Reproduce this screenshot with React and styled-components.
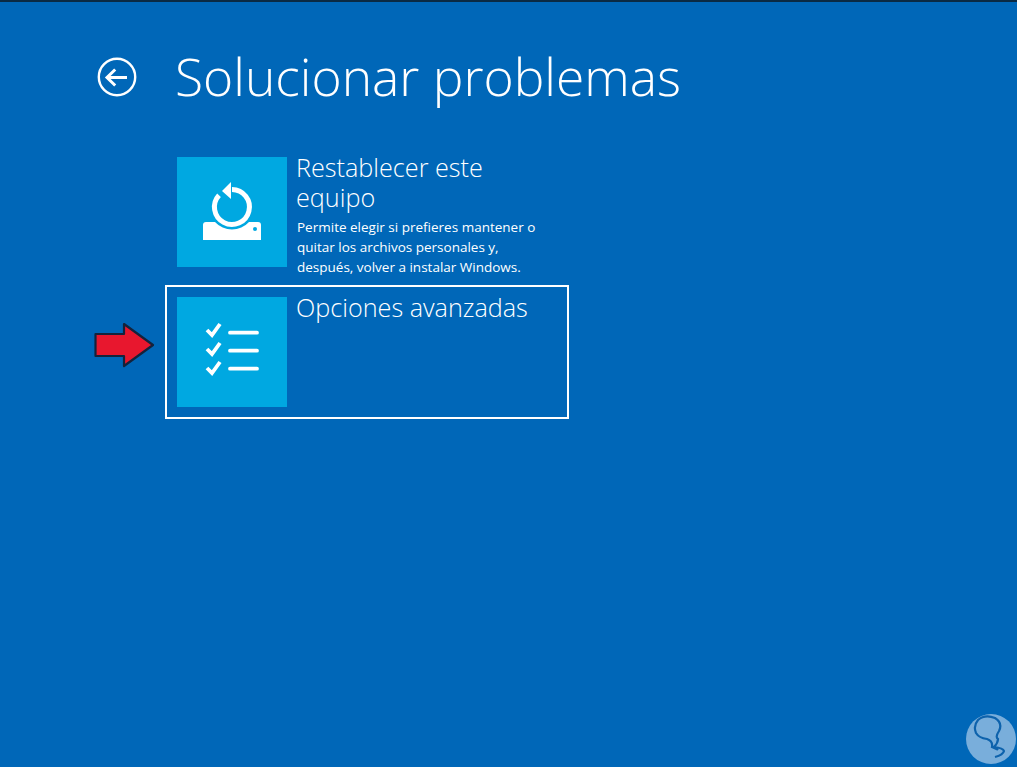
import React from 'react'
import styled, { createGlobalStyle } from 'styled-components'

const Global = createGlobalStyle`
  html, body { margin: 0; padding: 0; background: #0067b8; }
  body { font-family: "Open Sans", "Noto Sans", sans-serif; color: #fff; }
`

const Screen = styled.div`
  position: relative;
  width: 1017px;
  height: 767px;
  overflow: hidden;
  box-sizing: border-box;
  background: #0067b8;
  border-top: 2px solid #0a2a44;
  padding: 36px 0 0 97px;
`

const Header = styled.header`
  display: flex;
  align-items: center;
  gap: 38px;
  height: 78px;
`

const BackButton = styled.button`
  display: block;
  width: 40px;
  height: 40px;
  padding: 0;
  border: 0;
  background: none;
`

const Title = styled.h1`
  margin: -2px 0 0;
  font-size: 51.500px;
  font-weight: 300;
  line-height: 78px;
  white-space: nowrap;
`

const List = styled.div`
  display: flex;
  flex-direction: column;
  gap: 6px;
  margin: 29px 0 0 68px;
  width: 404px;
`

const Option = styled.div`
  display: flex;
  gap: 9px;
  box-sizing: border-box;
  height: 134px;
  padding: 10px;
  border: 2px solid ${(p) => (p.$selected ? '#fff' : 'transparent')};
`

const Tile = styled.div`
  flex: none;
  width: 110px;
  height: 110px;
  background: #00a8e1;
  display: flex;
  align-items: center;
  justify-content: center;
`

const Body = styled.div`
  width: 250px;
`

const OptionTitle = styled.div`
  font-size: 25.200px;
  font-weight: 300;
  line-height: 30px;
  margin-top: -5px;
`

const OptionText = styled.div`
  font-size: 13.500px;
  line-height: 20px;
  margin-top: 5px;
  margin-left: 1px;
`

const Arrow = styled.svg`
  position: absolute;
  left: 93px;
  top: 319px;
`

const Badge = styled.svg`
  position: absolute;
  left: 965px;
  top: 711px;
`

const BackIcon = () => (
  <svg width="40" height="40" viewBox="0 0 40 40" fill="none" stroke="#fff">
    <circle cx="20" cy="20" r="18.200" strokeWidth="2.400" />
    <path d="M10 20.500H30M18.200 12.500L10 20.500L18.200 28.500" strokeWidth="3" />
  </svg>
)

const ResetIcon = () => (
  <svg width="110" height="110" viewBox="0 0 110 110" fill="none">
    <path d="M29 65H38A23 23 0 0 0 72 65H81Q84 65 84 68V83H26V68Q26 65 29 65Z" fill="#fff" />
    <circle cx="78" cy="72" r="2" fill="#00a8e1" />
    <path d="M55 32.500A17.500 17.500 0 1 1 42 38.200" stroke="#fff" strokeWidth="5" />
    <path d="M54 25V42L45 34Z" fill="#fff" />
  </svg>
)

const ChecklistIcon = () => (
  <svg width="110" height="110" viewBox="0 0 110 110" fill="none" stroke="#fff">
    <path d="M30 33L35 38L43 27M30 52L35 57L43 46M30 71L35 76L43 65" strokeWidth="3.800" />
    <path d="M53 35.700H80M53 53.700H80M53 71.700H80" strokeWidth="3.800" strokeLinecap="round" />
  </svg>
)

const App = () => (
  <>
    <Global />
    <Screen>
      <Header>
        <BackButton aria-label="Volver"><BackIcon /></BackButton>
        <Title>Solucionar problemas</Title>
      </Header>
      <List>
        <Option>
          <Tile><ResetIcon /></Tile>
          <Body>
            <OptionTitle>Restablecer este equipo</OptionTitle>
            <OptionText>Permite elegir si prefieres mantener o quitar los archivos personales y, después, volver a instalar Windows.</OptionText>
          </Body>
        </Option>
        <Option $selected>
          <Tile><ChecklistIcon /></Tile>
          <Body>
            <OptionTitle>Opciones avanzadas</OptionTitle>
          </Body>
        </Option>
      </List>
      <Arrow width="62" height="48" viewBox="0 0 62 48">
        <path d="M2.500 13H31V3L60 24L31 45V35H2.500Z" fill="#e8172e" stroke="#14233c" strokeWidth="2.200" strokeLinejoin="round" />
      </Arrow>
      <Badge width="52" height="52" viewBox="0 0 52 52" fill="none">
        <circle cx="26" cy="26" r="25" fill="#79aedb" />
        <path d="M30 44Q38 42 39 38Q38 35 29 34Q33 30 33 26Q30 24 34 18Q38 10 30 5Q20 1 13 7Q8 13 11 20Q14 25 22 26Q28 28 27 34Q32 36 33 37" stroke="#0d62ac" strokeWidth="2.200" />
      </Badge>
    </Screen>
  </>
)

export default App
